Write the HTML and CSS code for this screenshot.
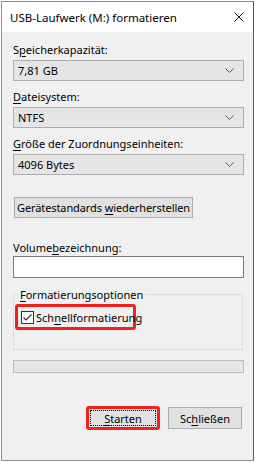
FILE: index.html
```html
<!DOCTYPE html>
<html lang="de">
<head>
  <meta charset="UTF-8">
  <meta name="viewport" content="width=device-width, initial-scale=1.0">
  <title>USB-Laufwerk (M:) formatieren</title>
  <link rel="stylesheet" href="styles.css">
</head>
<body>
  <div class="window">
    <header class="titlebar">
      <span class="title">USB-Laufwerk (M:) formatieren</span>
      <svg class="close" width="10" height="10" viewBox="0 0 10 10">
        <path d="M0.5 0.5 L9.5 9.5 M9.5 0.5 L0.5 9.5" stroke="#111" stroke-width="1" fill="none"/>
      </svg>
    </header>
    <div class="content">
      <div class="label label-first">S<u>p</u>eicherkapazität:</div>
      <div class="combo">
        <span>7,81 GB</span>
        <svg class="chevron" width="9" height="5" viewBox="0 0 9 5"><path d="M0.5 0.5 L4.5 4.5 L8.5 0.5" stroke="#5a5a5a" fill="none"/></svg>
      </div>
      <div class="label"><u>D</u>ateisystem:</div>
      <div class="combo">
        <span>NTFS</span>
        <svg class="chevron" width="9" height="5" viewBox="0 0 9 5"><path d="M0.5 0.5 L4.5 4.5 L8.5 0.5" stroke="#5a5a5a" fill="none"/></svg>
      </div>
      <div class="label"><u>G</u>röße der Zuordnungseinheiten:</div>
      <div class="combo">
        <span>4096 Bytes</span>
        <svg class="chevron" width="9" height="5" viewBox="0 0 9 5"><path d="M0.5 0.5 L4.5 4.5 L8.5 0.5" stroke="#5a5a5a" fill="none"/></svg>
      </div>
      <div class="btn btn-reset"><span>Gerätestandards <u>w</u>iederherstellen</span></div>
      <div class="label label-volume">Volume<u>b</u>ezeichnung:</div>
      <div class="textbox"></div>
      <fieldset class="group">
        <legend><u>F</u>ormatierungsoptionen</legend>
        <div class="highlight check-row">
          <svg class="checkbox" width="13" height="13" viewBox="0 0 13 13">
            <rect x="0.5" y="0.5" width="12" height="12" fill="#fff" stroke="#333"/>
            <path d="M2.5 6.5 L5 9 L10.5 3.5" stroke="#333" stroke-width="1.2" fill="none"/>
          </svg>
          <span>Sch<u>n</u>ellformatierung</span>
        </div>
      </fieldset>
      <div class="progress"></div>
      <div class="actions">
        <div class="btn btn-action btn-start"><span class="focus"><span><u>S</u>tarten</span></span></div>
        <div class="btn btn-action"><span>Sc<u>h</u>ließen</span></div>
      </div>
    </div>
  </div>
</body>
</html>
```
FILE: styles.css
```css
:root {
  --face: #f0f0f0;
  --text: #000;
  --control: #e5e5e5;
  --control-border: #adadad;
  --red: #f0221b;
}
body {
  margin: 0;
  background-color: #ffffff;
  font-family: "Noto Sans", "Open Sans", sans-serif;
  font-size: 11px;
  color: var(--text);
}
u {
  text-decoration-thickness: 1px;
  text-underline-offset: 2px;
}
.window {
  box-sizing: border-box;
  width: 253px;
  height: 460px;
  margin: 1px 0 0 1px;
  background-color: var(--face);
  border: 1px solid #8c8c8c;
  border-right-color: #5a5a5a;
  display: flex;
  flex-direction: column;
}
.titlebar {
  height: 30px;
  flex: none;
  background-color: #fff;
  display: flex;
  align-items: center;
  justify-content: space-between;
  padding: 0 9px 0 8px;
  font-size: 11.5px;
}
.content {
  padding: 0 9px 0 11px;
  display: flex;
  flex-direction: column;
  align-items: stretch;
}
.label {
  line-height: 15px;
  height: 15px;
  margin-top: 8px;
  margin-bottom: 3px;
}
.label-first {
  margin-top: 10px;
}
.combo {
  box-sizing: border-box;
  height: 21px;
  background-color: var(--control);
  border: 1px solid var(--control-border);
  display: flex;
  align-items: center;
  justify-content: space-between;
  padding: 0 9px 0 4px;
}
.chevron {
  display: block;
}
.btn {
  box-sizing: border-box;
  background-color: #e1e1e1;
  border: 1px solid var(--control-border);
  display: flex;
  align-items: center;
  justify-content: center;
}
.btn-reset {
  align-self: flex-start;
  width: 179px;
  height: 21px;
  margin: 22px 0 0 1px;
  letter-spacing: -0.1px;
}
.label-volume {
  margin-top: 22px;
  margin-bottom: 1px;
}
.textbox {
  box-sizing: border-box;
  height: 22px;
  background-color: #fff;
  border: 1px solid #7a7a7a;
}
.group {
  box-sizing: border-box;
  margin: 9px 1px 0 0;
  padding: 2px 0 0 1px;
  height: 63px;
  border: 1px solid #dcdcdc;
  min-width: 0;
}
.group legend {
  padding: 0 2px;
  margin-left: 3px;
  line-height: 15px;
}
.highlight {
  border: 3px solid var(--red);
  border-radius: 3px;
}
.check-row {
  width: 121px;
  box-sizing: border-box;
  height: 26px;
  display: flex;
  align-items: center;
  gap: 2px;
  padding-left: 3px;
}
.checkbox {
  display: block;
  flex: none;
}
.progress {
  box-sizing: border-box;
  height: 13px;
  margin-top: 10px;
  background-color: #e6e6e6;
  border: 1px solid #bcbcbc;
}
.actions {
  display: flex;
  justify-content: flex-end;
  gap: 8px;
  margin-top: 34px;
  padding-right: 2px;
}
.btn-action {
  width: 74px;
  height: 22px;
}
.btn-start {
  border: 3px solid var(--red);
  border-radius: 3px;
  height: 24px;
  margin-top: -1px;
  padding: 1px;
}
.btn-start .focus {
  flex: 1;
  align-self: stretch;
  display: flex;
  align-items: center;
  justify-content: center;
  border: 1px dotted #000;
}
```
